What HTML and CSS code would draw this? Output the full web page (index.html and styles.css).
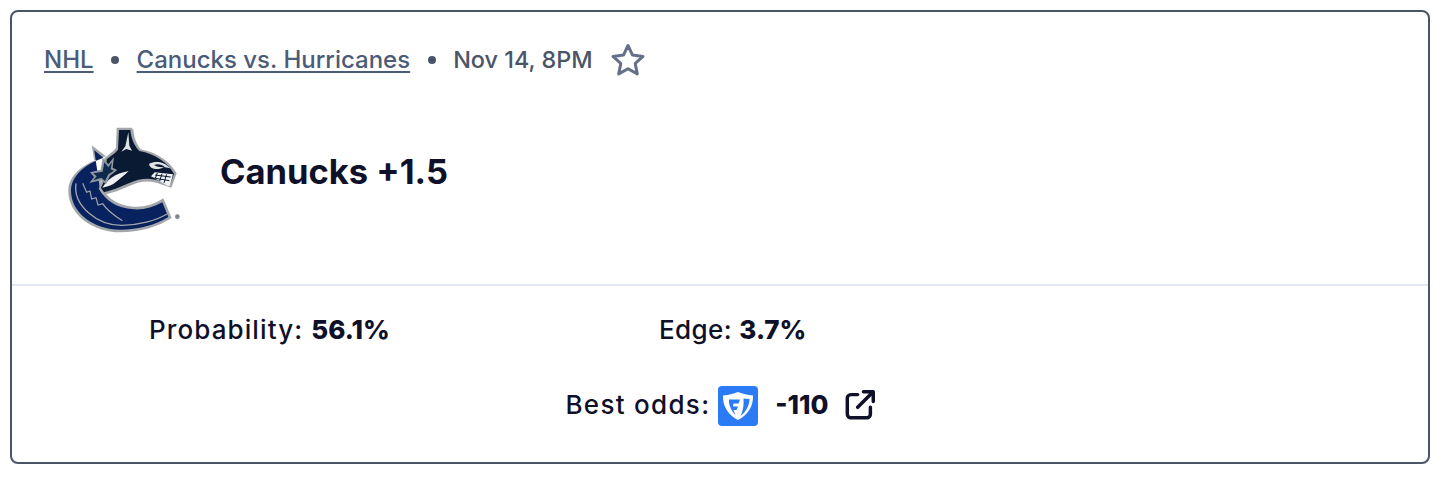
FILE: index.html
```html
<!DOCTYPE html>
<html lang="en">
<head>
<meta charset="utf-8">
<title>Canucks +1.5</title>
<link rel="stylesheet" href="styles.css">
</head>
<body>
<article class="card">
  <header class="top">
    <div class="meta">
      <a class="link" href="#">NHL</a>
      <span class="dot"></span>
      <a class="link" href="#">Canucks vs. Hurricanes</a>
      <span class="dot"></span>
      <span class="date">Nov 14, 8PM</span>
      <svg class="star" viewBox="0 0 36 36" aria-hidden="true"><path d="M18 3.5l4.5 9.6 10.5 1.3-7.8 7.1 2.1 10.4-9.3-5.2-9.3 5.2 2.1-10.4L3 14.4l10.5-1.3z" fill="none" stroke="#64708a" stroke-width="3" stroke-linejoin="round"/></svg>
    </div>
    <div class="pick">
      <svg class="logo" viewBox="0 0 450 390" aria-hidden="true">
        <path d="M125 91L168 124C100 145 55 180 55 228C55 300 130 352 210 352C270 352 325 335 365 309L340 250C310 270 280 277 250 275C205 272 175 250 160 225L132 132Z" fill="#a3a7ab"/>
        <path d="M133 106L160 128C100 150 63 185 63 228C63 295 134 344 210 344C265 344 318 330 355 306L337 262C310 278 280 285 250 283C200 280 165 255 150 225L137 135Z" fill="#08215f"/>
        <path d="M78 205C68 270 140 331 215 331C265 331 318 317 351 297" fill="none" stroke="#a3a7ab" stroke-width="4"/>
        <path d="M98 205L110 232L120 228L125 252L138 248L144 270L158 266C170 285 190 300 217 317" fill="none" stroke="#a3a7ab" stroke-width="3.500"/>
        <path d="M200 38H245L250 45C252 65 258 85 272 103C320 112 360 140 380 175L364 218L332 208C300 194 270 199 240 212C215 224 185 234 160 240L146 222L158 190L163 130L190 108L198 98Z" fill="#a3a7ab"/>
        <path d="M207 45H241C243 65 250 90 268 108C316 117 352 142 372 176L360 210L332 200C300 186 270 191 238 204C212 216 185 226 162 232L153 218L166 190L170 133L195 114L204 104Z" fill="#0a1a33"/>
        <path d="M235 52L238 92L246 107L229 102L214 110L226 94Z" fill="#dfe3e6"/>
        <path d="M157 218C172 194 194 176 236 168C222 182 205 196 190 207C180 212 168 216 157 218Z" fill="#eef0f1"/>
        <path d="M120 172L152 164L158 128L175 148L192 126L188 158L202 165L180 182L168 208L153 196L118 204L132 186Z" fill="#8f979e"/>
        <path d="M130 175L158 170L163 142L175 157L186 142L182 163L192 167L175 178L165 198L154 188L130 196L140 184Z" fill="#0d2a4e"/>
        <path d="M298 146C314 138 342 138 360 160L342 156C330 164 314 164 304 158C300 154 296 150 298 146Z" fill="#dfe3e6"/>
        <path d="M312 150C322 146 336 148 344 156C334 158 322 156 312 150Z" fill="#0a1a33"/>
        <path d="M303 184L314 172L369 178L360 212L352 212Z" fill="#eef0f1"/>
        <path d="M315 180L362 186M310 189L358 197M322 174L316 190M336 176L329 198M350 178L342 204" fill="none" stroke="#0a1a33" stroke-width="3"/>
        <circle cx="382" cy="305" r="7" fill="#7f878e"/>
      </svg>
      <h2 class="title">Canucks +1.5</h2>
    </div>
  </header>
  <section class="stats">
    <div class="stat-row">
      <p class="stat stat-wide">Probability: <strong>56.1%</strong></p>
      <p class="stat stat-tight">Edge: <strong>3.7%</strong></p>
    </div>
    <div class="odds">
      <span class="odds-label">Best odds:</span>
      <span class="book">
        <svg viewBox="0 0 40 40" aria-hidden="true"><path d="M20 6C25 8 29 9 35 9.500C35.500 20 30 29 20 34C10 29 4.500 20 5 9.500C11 9 15 8 20 6Z" fill="#fff"/><path d="M11 13.500H22L20.500 17.500H15.500L15 20.500H20L18.500 24H15.500L17.500 29C13.500 25 10.500 19 11 13.500Z" fill="#2c7bf6"/><path d="M25.500 12.500L31.500 13C31.500 19 28 26 22.500 30C25 25 26 19 25.500 12.500Z" fill="#2c7bf6"/></svg>
      </span>
      <strong class="price">-110</strong>
      <svg class="ext" viewBox="2 2 26 26" aria-hidden="true"><path d="M13 6H7a3 3 0 0 0-3 3v14a3 3 0 0 0 3 3h14a3 3 0 0 0 3-3v-6M13 17L26 4M18 3.500h8.500V12" fill="none" stroke="#0f1029" stroke-width="3" stroke-linecap="round" stroke-linejoin="round"/></svg>
    </div>
  </section>
</article>
</body>
</html>
```
FILE: styles.css
```css
* { box-sizing: border-box; }
html, body { margin: 0; background: #fff; }
body {
  padding: 10px 12px 14px 10px;
  font-family: Inter, "Liberation Sans", sans-serif;
  color: #0f1029;
}
.card {
  width: 1420px;
  height: 454px;
  border: 2px solid #4a5568;
  border-radius: 8px;
  display: flex;
  flex-direction: column;
}
.top {
  height: 274px;
  border-bottom: 2px solid #e2e8f0;
  padding: 30px 32px 0;
}
.meta {
  display: flex;
  align-items: center;
  height: 36px;
  font-size: 24px;
  line-height: 34px;
  font-weight: 500;
  color: #4a5568;
}
.link { color: #4a5c78; text-decoration: underline; text-underline-offset: 3px; }
.dot {
  width: 8px;
  height: 8px;
  border-radius: 50%;
  background: #4a5568;
  margin: 0 17.500px;
}
.date { font-size: 23.400px; }
.star { width: 36px; height: 36px; margin-left: 17px; }
.pick {
  display: flex;
  align-items: center;
  margin-top: 37px;
  margin-left: 6px;
}
.logo { width: 150px; height: 130px; }
.title {
  margin: 0 0 17px 20px;
  font-size: 34.500px;
  font-weight: 700;
  line-height: 40px;
}
.stats { flex: 1; display: flex; flex-direction: column; font-size: 26px; font-weight: 500; }
.stat-row {
  display: grid;
  grid-template-columns: 510px 1fr;
  padding: 26px 0 0 137px;
}
.stat { margin: 0; line-height: 36px; }
.stat-wide { letter-spacing: 1.100px; }
.stat-tight { letter-spacing: 0.400px; }
strong { font-weight: 800; letter-spacing: 0; }
.odds {
  display: flex;
  align-items: center;
  justify-content: center;
  margin-top: 38px;
  height: 40px;
  line-height: 38px;
}
.odds-label { letter-spacing: 1.300px; padding-bottom: 2px; }
.book {
  width: 40px;
  height: 40px;
  margin-left: 8px;
  background: #2c7bf6;
  border-radius: 4px;
  display: flex;
}
.book svg { width: 40px; height: 40px; }
.price { margin-left: 17px; padding-bottom: 2px; }
.ext { width: 30px; height: 30px; margin-left: 16px; margin-bottom: 2px; }
```
